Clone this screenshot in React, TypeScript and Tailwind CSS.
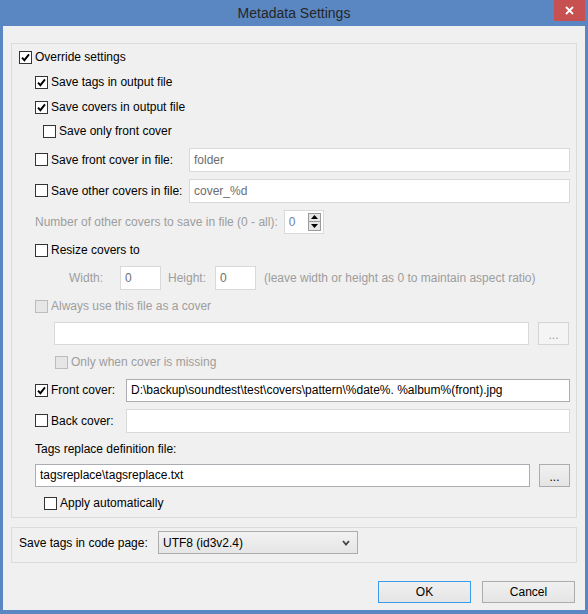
import React from 'react';

const FONT = "font-['Segoe_UI','Liberation_Sans',Arial,sans-serif]";

interface CheckProps {
  label: string;
  checked?: boolean;
  disabled?: boolean;
  className?: string;
}

const CheckBox = ({ label, checked = false, disabled = false, className = '' }: CheckProps) => (
  <div className={`flex items-center gap-[3px] ${className}`}>
    <span
      className={`w-[13px] h-[13px] border flex items-center justify-center shrink-0 ${
        disabled ? 'border-[#bcbcbc] bg-[#e6e6e6]' : 'border-[#333333] bg-white'
      }`}
    >
      {checked && (
        <svg width="9" height="9" viewBox="0 0 9 9">
          <path d="M1 4.6 L3.4 7.2 L8 1.4" stroke="#000" strokeWidth="1.9" fill="none" />
        </svg>
      )}
    </span>
    <span className={`whitespace-nowrap ${disabled ? 'text-[#9d9d9d]' : 'text-black'}`}>{label}</span>
  </div>
);

const TextBox = ({ value = '', className = '', dark = false, muted = false }: { value?: string; className?: string; dark?: boolean; muted?: boolean }) => (
  <div
    className={`bg-white border flex items-center px-[4px] whitespace-nowrap overflow-hidden ${
      dark ? 'border-[#abadb3]' : 'border-[#d9d9d9]'
    } ${muted ? 'text-[#6d6d6d]' : 'text-black'} ${className}`}
  >
    {value}
  </div>
);

const DotsButton = ({ disabled = false }: { disabled?: boolean }) => (
  <div
    className={`w-[31px] h-[23px] border flex items-center justify-center text-[12px] pt-[3px] ${
      disabled
        ? 'border-[#d5d5d5] bg-[#f4f4f4] text-[#9d9d9d]'
        : 'border-[#acacac] bg-gradient-to-b from-[#f0f0f0] to-[#e5e5e5] text-black'
    }`}
  >
    ...
  </div>
);

export default function App() {
  return (
    <div className={`w-[588px] h-[614px] bg-[#5a87c1] flex flex-col px-[3px] pb-[4px] text-[12px] leading-none ${FONT}`}>
      {/* タイトルバー */}
      <div className="h-[26px] relative flex items-center justify-center">
        <span className="text-[14px] text-[#262626] pb-[1px]">Metadata Settings</span>
        <div className="absolute right-0 top-0 w-[31px] h-[21px] bg-[#c75050] flex items-center justify-center">
          <svg width="9" height="9" viewBox="0 0 9 9">
            <path d="M1 1 L8 8 M8 1 L1 8" stroke="#fff" strokeWidth="1.8" />
          </svg>
        </div>
      </div>

      <div className="flex-1 bg-[#f0f0f0] flex flex-col pl-[8px] pr-[10px]">
        {/* メイン設定 */}
        <div className="mt-[17px] w-[566px] h-[475px] border border-[#dcdcdc] flex flex-col pl-[7px]">
          <div className="h-[26px] flex items-center">
            <CheckBox label="Override settings" checked />
          </div>
          <div className="h-[24px] flex items-center pl-[16px]">
            <CheckBox label="Save tags in output file" checked />
          </div>
          <div className="h-[26px] flex items-center pl-[16px]">
            <CheckBox label="Save covers in output file" checked />
          </div>
          <div className="h-[22px] flex items-center pl-[24px]">
            <CheckBox label="Save only front cover" />
          </div>
          <div className="h-[35px] flex items-center pl-[16px]">
            <CheckBox label="Save front cover in file:" className="w-[154px]" />
            <TextBox value="folder" muted className="w-[381px] h-[24px]" />
          </div>
          <div className="h-[27px] flex items-center pl-[16px]">
            <CheckBox label="Save other covers in file:" className="w-[154px]" />
            <TextBox value="cover_%d" muted className="w-[381px] h-[24px]" />
          </div>
          <div className="h-[35px] flex items-center pl-[16px] gap-[6px]">
            <span className="text-[#9d9d9d] whitespace-nowrap">Number of other covers to save in file (0 - all):</span>
            <div className="w-[40px] h-[24px] bg-white border border-[#d9d9d9] flex items-center pl-[4px] pr-[2px] justify-between">
              <span className="text-[#6d7fa0]">0</span>
              <div className="flex flex-col w-[13px] h-[18px] border border-[#9a9a9a] bg-[#e6e6e6]">
                <div className="flex-1 flex items-center justify-center border-b border-[#9a9a9a]">
                  <svg width="7" height="4" viewBox="0 0 7 4"><path d="M0 4 L3.5 0 L7 4 Z" fill="#000" /></svg>
                </div>
                <div className="flex-1 flex items-center justify-center">
                  <svg width="7" height="4" viewBox="0 0 7 4"><path d="M0 0 L3.5 4 L7 0 Z" fill="#000" /></svg>
                </div>
              </div>
            </div>
          </div>
          <div className="h-[22px] flex items-center pl-[16px]">
            <CheckBox label="Resize covers to" />
          </div>
          <div className="h-[33px] flex items-center pl-[50px] text-[#9d9d9d]">
            <span className="w-[51px]">Width:</span>
            <TextBox value="0" muted className="w-[41px] h-[24px]" />
            <span className="ml-[7px] w-[47px]">Height:</span>
            <TextBox value="0" muted className="w-[41px] h-[24px]" />
            <span className="ml-[8px] whitespace-nowrap">(leave width or height as 0 to maintain aspect ratio)</span>
          </div>
          <div className="h-[24px] flex items-center pl-[16px]">
            <CheckBox label="Always use this file as a cover" disabled />
          </div>
          <div className="h-[30px] flex items-center pl-[35px] gap-[9px]">
            <TextBox className="w-[475px] h-[23px]" />
            <DotsButton disabled />
          </div>
          <div className="h-[28px] flex items-center pl-[36px]">
            <CheckBox label="Only when cover is missing" disabled />
          </div>
          <div className="h-[28px] flex items-center pl-[16px]">
            <CheckBox label="Front cover:" checked className="w-[91px]" />
            <TextBox value="D:\backup\soundtest\test\covers\pattern\%date%. %album%(front).jpg" dark className="w-[444px] h-[23px]" />
          </div>
          <div className="h-[33px] flex items-center pl-[16px]">
            <CheckBox label="Back cover:" className="w-[91px]" />
            <TextBox className="w-[444px] h-[24px]" />
          </div>
          <div className="h-[24px] flex items-center pl-[16px]">
            <span>Tags replace definition file:</span>
          </div>
          <div className="h-[28px] flex items-center pl-[16px] gap-[9px]">
            <TextBox value="tagsreplace\tagsreplace.txt" dark className="w-[495px] h-[23px]" />
            <DotsButton />
          </div>
          <div className="h-[28px] flex items-center pl-[25px]">
            <CheckBox label="Apply automatically" />
          </div>
        </div>

        {/* コードページ */}
        <div className="mt-[9px] w-[566px] h-[36px] border border-[#dcdcdc] flex items-start pt-[3px] pl-[7px]">
          <span className="w-[139px] h-[23px] flex items-center">Save tags in code page:</span>
          <div className="w-[200px] h-[23px] border border-[#acacac] bg-gradient-to-b from-[#f2f2f2] to-[#e5e5e5] flex items-center justify-between pl-[4px] pr-[7px]">
            <span>UTF8 (id3v2.4)</span>
            <svg width="8" height="6" viewBox="0 0 8 6">
              <path d="M1 1 L4 4.5 L7 1" stroke="#444" strokeWidth="1.8" fill="none" />
            </svg>
          </div>
        </div>

        {/* ボタン */}
        <div className="mt-[18px] flex justify-end gap-[11px]">
          <div className="w-[93px] h-[22px] border border-[#3c9be8] bg-gradient-to-b from-[#f0f0f0] to-[#e5e5e5] flex items-center justify-center">
            OK
          </div>
          <div className="w-[93px] h-[22px] border border-[#acacac] bg-gradient-to-b from-[#f0f0f0] to-[#e5e5e5] flex items-center justify-center">
            Cancel
          </div>
        </div>
      </div>
    </div>
  );
}
